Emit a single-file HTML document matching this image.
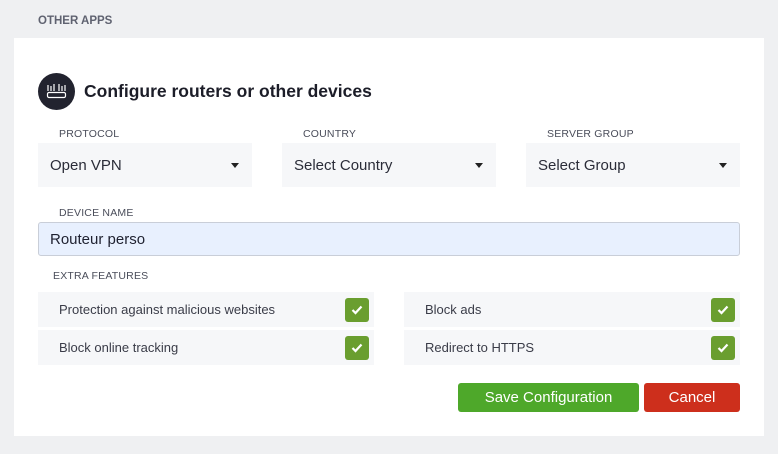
<!DOCTYPE html>
<html><head><meta charset="utf-8"><style>
*{box-sizing:border-box;margin:0;padding:0}
body{width:778px;height:454px;background:#eff0f2;font-family:"Liberation Sans",sans-serif;position:relative;overflow:hidden;color:#1f2130}
.abs{position:absolute}
.lbl{position:absolute;font-size:10.5px;color:#4a4d5a;letter-spacing:.2px}
.card{position:absolute;left:14px;top:38px;width:750px;height:398px;background:#fff}
.sel{position:absolute;top:143px;height:44px;width:214px;background:#f6f7f9;font-size:15px;color:#2a2c38;padding:14px 0 0 12px}
.sel:after{content:"";position:absolute;right:13px;top:20px;border-left:4px solid transparent;border-right:4px solid transparent;border-top:5px solid #222}
.row{position:absolute;height:35px;background:#f6f7f9;font-size:13px;color:#3a3c48;padding:10px 0 0 21px}
.cb{position:absolute;right:5px;top:6px;width:24px;height:24px;background:#6a9e2f;border-radius:3px}
.cb svg{position:absolute;left:6px;top:7px}
.btn{position:absolute;top:383px;height:29px;border-radius:3px;color:#fff;font-size:15px;text-align:center;line-height:29px}
</style></head><body>
<div class="abs" style="left:38px;top:15px;font-size:11.5px;font-weight:bold;color:#5f6270">OTHER APPS</div>
<div class="card"></div>
<div class="abs" style="left:38px;top:73px;width:37px;height:37px;border-radius:50%;background:#22232f">
<svg width="37" height="37" viewBox="0 0 37 37"><g stroke="#fff" fill="none" stroke-width="1.2">
<path d="M10 12v6M13 13v5M16 11v7M21 11v7M24 13v5M27 12v6"/>
<rect x="9.5" y="19.5" width="18" height="5" rx="1.5"/></g>
<g fill="#22232f"><rect x="20" y="21" width="1.5" height="2"/><rect x="22.5" y="21" width="1.5" height="2"/></g></svg></div>
<div class="abs" style="left:84px;top:81px;font-size:17.5px;font-weight:bold;color:#1c1d28">Configure routers or other devices</div>
<div class="lbl" style="left:59px;top:128px">PROTOCOL</div>
<div class="lbl" style="left:303px;top:128px">COUNTRY</div>
<div class="lbl" style="left:547px;top:128px">SERVER GROUP</div>
<div class="sel" style="left:38px">Open VPN</div>
<div class="sel" style="left:282px">Select Country</div>
<div class="sel" style="left:526px">Select Group</div>
<div class="lbl" style="left:59px;top:207px">DEVICE NAME</div>
<div class="abs" style="left:38px;top:222px;width:702px;height:34px;background:#e8f0fe;border:1px solid #c9ced8;border-radius:3px;font-size:15px;padding:8px 0 0 11px;color:#1f2130">Routeur perso</div>
<div class="lbl" style="left:53px;top:270px">EXTRA FEATURES</div>
<div class="row" style="left:38px;top:292px;width:336px">Protection against malicious websites<div class="cb"><svg width="12" height="10"><path d="M1.5 5l3 3 6-6.5" stroke="#fff" stroke-width="2.2" fill="none"/></svg></div></div>
<div class="row" style="left:38px;top:330px;width:336px">Block online tracking<div class="cb"><svg width="12" height="10"><path d="M1.5 5l3 3 6-6.5" stroke="#fff" stroke-width="2.2" fill="none"/></svg></div></div>
<div class="row" style="left:404px;top:292px;width:336px">Block ads<div class="cb"><svg width="12" height="10"><path d="M1.5 5l3 3 6-6.5" stroke="#fff" stroke-width="2.2" fill="none"/></svg></div></div>
<div class="row" style="left:404px;top:330px;width:336px">Redirect to HTTPS<div class="cb"><svg width="12" height="10"><path d="M1.5 5l3 3 6-6.5" stroke="#fff" stroke-width="2.2" fill="none"/></svg></div></div>
<div class="btn" style="left:458px;width:181px;background:#4ea82a">Save Configuration</div>
<div class="btn" style="left:644px;width:96px;background:#cd2f1c">Cancel</div>
</body></html>
